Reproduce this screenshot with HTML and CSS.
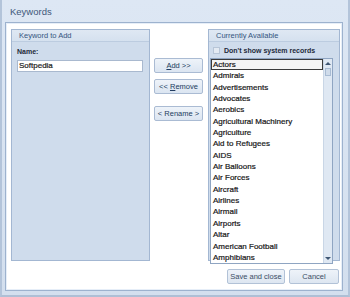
FILE: index.html
```html
<!DOCTYPE html>
<html>
<head>
<meta charset="utf-8">
<link rel="stylesheet" href="styles.css">
</head>
<body>
<div class="window">
  <div class="titlebar">Keywords</div>
  <div class="panel">
    <div class="main">
      <div class="group left">
        <div class="group-head">Keyword to Add</div>
        <div class="group-body">
          <div class="label">Name:</div>
          <div class="input">Softpedia</div>
        </div>
      </div>
      <div class="actions">
        <div class="btn"><u>A</u>dd &gt;&gt;</div>
        <div class="btn">&lt;&lt; <u>R</u>emove</div>
        <div class="btn btn-gap">&lt; Rename &gt;</div>
      </div>
      <div class="group right">
        <div class="group-head">Currently Available</div>
        <div class="group-body">
          <div class="check-row"><span class="checkbox"></span><span class="check-label">Don't show system records</span></div>
          <div class="listbox">
            <div class="items">
              <div class="item selected">Actors</div>
              <div class="item">Admirals</div>
              <div class="item">Advertisements</div>
              <div class="item">Advocates</div>
              <div class="item">Aerobics</div>
              <div class="item">Agricultural Machinery</div>
              <div class="item">Agriculture</div>
              <div class="item">Aid to Refugees</div>
              <div class="item">AIDS</div>
              <div class="item">Air Balloons</div>
              <div class="item">Air Forces</div>
              <div class="item">Aircraft</div>
              <div class="item">Airlines</div>
              <div class="item">Airmail</div>
              <div class="item">Airports</div>
              <div class="item">Altar</div>
              <div class="item">American Football</div>
              <div class="item">Amphibians</div>
            </div>
            <div class="scrollbar">
              <div class="arrow up"></div>
              <div class="thumb"></div>
              <div class="track"></div>
              <div class="arrow down"></div>
            </div>
          </div>
        </div>
      </div>
    </div>
    <div class="footer">
      <div class="btn fbtn save">Save and close</div>
      <div class="btn fbtn cancel">Cancel</div>
    </div>
  </div>
</div>
</body>
</html>
```

FILE: styles.css
```css
html, body {
  margin: 0;
  padding: 0;
}
body {
  width: 350px;
  height: 297px;
  overflow: hidden;
  font-family: "Liberation Sans", Arial, sans-serif;
  font-size: 8px;
  color: #1b1b1b;
}
.window {
  width: 350px;
  height: 297px;
  box-sizing: border-box;
  background: linear-gradient(#dde7f4, #d3dfee);
  border-left: 2px solid #b3c4da;
  border-right: 2px solid #b3c4da;
  border-bottom: 2px solid #aebfd5;
  display: flex;
  flex-direction: column;
}
.titlebar {
  height: 22px;
  box-sizing: border-box;
  padding: 6px 0 0 8px;
  font-size: 9.5px;
  color: #3e577a;
  line-height: 12px;
}
.panel {
  margin: 0 5px 4px 3px;
  flex: 1;
  background: #fff;
  border: 1px solid #9db2ce;
  box-shadow: inset 0 0 0 1px #e6eef8;
  display: flex;
  flex-direction: column;
  padding: 6px 2px 0 5px;
}
.main {
  display: flex;
  height: 232px;
}
.group {
  display: flex;
  flex-direction: column;
  background: #cfdcec;
  border: 1px solid #a3b7d2;
  box-sizing: border-box;
}
.group.left { width: 139px; }
.group.right { width: 132px; margin-left: 5px; }
.group-head {
  height: 11px;
  line-height: 11px;
  font-size: 7.5px;
  color: #35557f;
  padding-left: 7px;
  background: linear-gradient(#dfe8f3, #d5e1ef);
  border-bottom: 1px solid #bccce0;
}
.group-body {
  flex: 1;
  display: flex;
  flex-direction: column;
}
.left .group-body { padding: 5px 5px 0 5px; }
.label {
  font-weight: bold;
  font-size: 7px;
  line-height: 10px;
  color: #1e2a3a;
}
.input {
  margin-top: 3px;
  height: 12px;
  box-sizing: border-box;
  background: #fff;
  border: 1px solid #a9b9cf;
  line-height: 10px;
  padding-left: 1px;
  font-size: 8px;
  width: 126px;
  -webkit-text-stroke: 0.2px #151515;
}
.actions {
  width: 49px;
  margin-left: 4px;
  padding-top: 29px;
  display: flex;
  flex-direction: column;
  gap: 6px;
}
.btn {
  height: 15px;
  box-sizing: border-box;
  border: 1px solid #aabbd3;
  border-radius: 2px;
  background: linear-gradient(#eef3f9, #dbe5f1);
  color: #223c60;
  font-size: 7.5px;
  line-height: 13px;
  text-align: center;
  white-space: nowrap;
}
.btn u { text-decoration: underline; }
.btn-gap { margin-top: 6px; }
.right .group-body { padding: 3px 6px 1px 1px; }
.check-row {
  display: flex;
  align-items: center;
  height: 11px;
  padding-left: 3px;
}
.checkbox {
  width: 7px;
  height: 7px;
  box-sizing: border-box;
  border: 1px solid #b7c5d7;
  background: #e3eaf3;
  margin-right: 4px;
}
.check-label {
  font-weight: bold;
  font-size: 7px;
  color: #1e2a3a;
  white-space: nowrap;
}
.listbox {
  margin-top: 2px;
  flex: 1;
  display: flex;
  background: #fff;
  border: 1px solid #8fa5c2;
  overflow: hidden;
}
.items {
  flex: 1;
  overflow: hidden;
}
.item {
  height: 11.35px;
  line-height: 11px;
  padding-left: 2px;
  white-space: nowrap;
  font-size: 8px;
  color: #151515;
  -webkit-text-stroke: 0.2px #151515;
}
.item.selected {
  border: 1px solid #3a3a3a;
  background: #f4f4f4;
  padding-left: 1px;
  box-sizing: border-box;
  line-height: 9.5px;
}
.scrollbar {
  width: 8px;
  display: flex;
  flex-direction: column;
  background: #dfe8f3;
  border-left: 1px solid #c9d6e6;
}
.arrow {
  height: 9px;
  position: relative;
}
.arrow::after {
  content: "";
  position: absolute;
  left: 1px;
  border-left: 3px solid transparent;
  border-right: 3px solid transparent;
}
.arrow.up::after {
  top: 3px;
  border-bottom: 3px solid #3f5673;
}
.arrow.down::after {
  top: 3px;
  border-top: 3px solid #3f5673;
}
.thumb {
  height: 8px;
  margin: 0 1px;
  box-sizing: border-box;
  border: 1px solid #a8bbd3;
  background: #cfdbea;
}
.track { flex: 1; }
.footer {
  display: flex;
  justify-content: flex-end;
  gap: 4px;
  padding: 8px 1px 0 0;
}
.fbtn {
  color: #3a4c64;
  background: linear-gradient(#eef3f9, #dde6f1);
  border-color: #b2c2d7;
}
.save { width: 58px; }
.cancel { width: 50px; }
```
